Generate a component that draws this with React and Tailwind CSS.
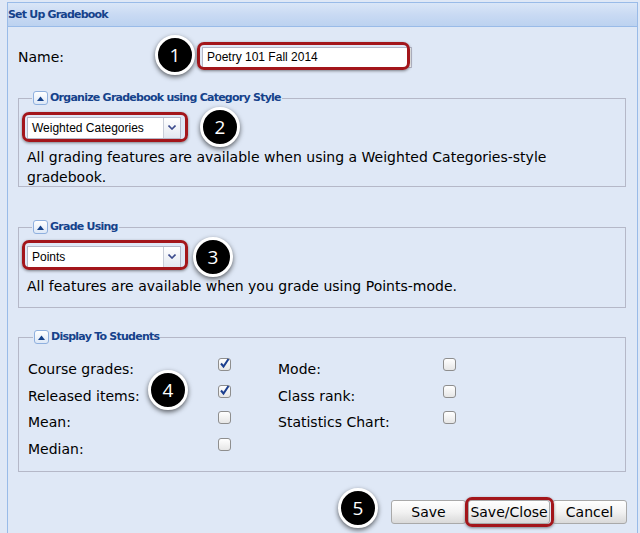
import React from 'react';

const Badge = ({ n, x, y }) => (
  <div
    className="absolute flex h-[40px] w-[40px] items-center justify-center rounded-full border-[3px] border-white bg-black text-[19px] text-white shadow-[0_2px_5px_rgba(0,0,0,0.6)] [font-family:'Open_Sans',sans-serif]"
    style={{ left: x - 20, top: y - 20 }}
  >
    {n}
  </div>
);

const Highlight = ({ x, y, w, h }) => (
  <div
    className="pointer-events-none absolute rounded-[7px] border-[3px] border-[#a3161b] shadow-[0_1px_3px_rgba(0,0,0,0.45)]"
    style={{ left: x, top: y, width: w, height: h }}
  />
);

const Legend = ({ children }) => (
  <legend className="ml-[5px] flex items-center gap-[2px] px-[1px]">
    <span className="flex h-[14px] w-[15px] items-center justify-center rounded-[3px] border border-[#8fb0de] bg-gradient-to-b from-white to-[#dde8f7]">
      <svg width="7" height="5" viewBox="0 0 7 5">
        <path d="M0 5 L3.5 0.5 L7 5 Z" fill="#15428b" />
      </svg>
    </span>
    <span className="text-[11px] font-bold text-[#15428b] [font-family:'DejaVu_Sans',sans-serif] tracking-[-0.75px]">
      {children}
    </span>
  </legend>
);

const Select = ({ value }) => (
  <div className="flex h-[22px] w-[154px] items-center border border-[#b5b8c8] bg-white">
    <span className="flex-1 pl-[4px] text-[12px] text-black [font-family:'Liberation_Sans',sans-serif]">{value}</span>
    <span className="flex h-full w-[17px] items-center justify-center border-l border-[#c8cdd8] bg-gradient-to-b from-white to-[#e3e8f0]">
      <svg width="8" height="5" viewBox="0 0 8 5">
        <path d="M0.5 0.5 L4 4 L7.5 0.5" fill="none" stroke="#3b4a8c" strokeWidth="1.6" />
      </svg>
    </span>
  </div>
);

const Check = ({ checked }) => (
  <span className="flex h-[13px] w-[13px] items-center justify-center rounded-[3px] border border-[#8e8e8e] bg-gradient-to-b from-white to-[#e6e6e6]">
    {checked && (
      <svg width="11" height="11" viewBox="0 0 11 11" className="-mt-[2px]">
        <path d="M2 5.5 L4.5 8.5 L9.5 1" fill="none" stroke="#1c3f8f" strokeWidth="2" />
      </svg>
    )}
  </span>
);

const Row = ({ label, checked, w }) => (
  <div className="flex h-[26.5px] items-center">
    <span style={{ width: w }}>{label}</span>
    <span className="-mt-[10px]"><Check checked={checked} /></span>
  </div>
);

const Btn = ({ children, w }) => (
  <button
    className="h-[24px] rounded-[3px] border border-[#a9a9a9] bg-gradient-to-b from-white via-[#f2f2f2] to-[#d9d9d9] text-[14px] text-black"
    style={{ width: w }}
  >
    {children}
  </button>
);

export default function App() {
  return (
    <div className="relative h-[533px] w-[640px] overflow-hidden bg-[#dfe8f6] pt-[2px] text-[14px] text-black [font-family:'DejaVu_Sans',sans-serif]">
      <div className="ml-[7px] h-[540px] w-[631px] border border-[#99bbe8]">
        <div className="flex h-[24px] items-center border-b border-[#99bbe8] bg-gradient-to-b from-[#dae6f7] via-[#c9daf3] to-[#bcd2f0] pl-[0px] pt-[2px]">
          <span className="text-[11px] font-bold text-[#15428b] tracking-[-0.8px]">Set Up Gradebook</span>
        </div>

        <div className="px-[10px]">
          <div className="mt-[19px] flex h-[22px] items-center">
            <span className="w-[184px]">Name:</span>
            <div className="flex h-[21px] w-[210px] items-center border border-[#b5b8c8] bg-white pl-[4px] text-[12px] [font-family:'Liberation_Sans',sans-serif]">
              Poetry 101 Fall 2014
            </div>
          </div>

          <fieldset className="mt-[22px] h-[97px] w-[608px] border border-[#b5b8c8] px-[8px]">
            <Legend>Organize Gradebook using Category Style</Legend>
            <div className="mt-[10px]"><Select value="Weighted Categories" /></div>
            <p className="mt-[8px] leading-[20px]">
              All grading features are available when using a Weighted Categories-style gradebook.
            </p>
          </fieldset>

          <fieldset className="mt-[32px] h-[89px] w-[608px] border border-[#b5b8c8] px-[8px]">
            <Legend>Grade Using</Legend>
            <div className="mt-[10px]"><Select value="Points" /></div>
            <p className="mt-[8px] leading-[20px]">All features are available when you grade using Points-mode.</p>
          </fieldset>

          <fieldset className="mt-[21px] h-[143px] w-[608px] border border-[#b5b8c8] px-[9px]">
            <Legend>Display To Students</Legend>
            <div className="mt-[11px] flex">
              <div className="w-[250px]">
                <Row w={190} label="Course grades:" checked />
                <Row w={190} label="Released items:" checked />
                <Row w={190} label="Mean:" />
                <Row w={190} label="Median:" />
              </div>
              <div>
                <Row w={165} label="Mode:" />
                <Row w={165} label="Class rank:" />
                <Row w={165} label="Statistics Chart:" />
              </div>
            </div>
          </fieldset>

          <div className="mt-[28px] flex justify-end gap-[2px]">
            <Btn w={75}>Save</Btn>
            <Btn w={82}>Save/Close</Btn>
            <Btn w={75}>Cancel</Btn>
          </div>
        </div>
      </div>

      <Highlight x={197} y={42} w={213} h={28} />
      <Highlight x={22} y={112} w={166} h={30} />
      <Highlight x={22} y={240} w={166} h={30} />
      <Highlight x={465} y={497} w={89} h={30} />

      <Badge n="1" x={175} y={55} />
      <Badge n="2" x={220} y={127} />
      <Badge n="3" x={213} y={257} />
      <Badge n="4" x={168} y={390} />
      <Badge n="5" x={358} y={508} />
    </div>
  );
}
